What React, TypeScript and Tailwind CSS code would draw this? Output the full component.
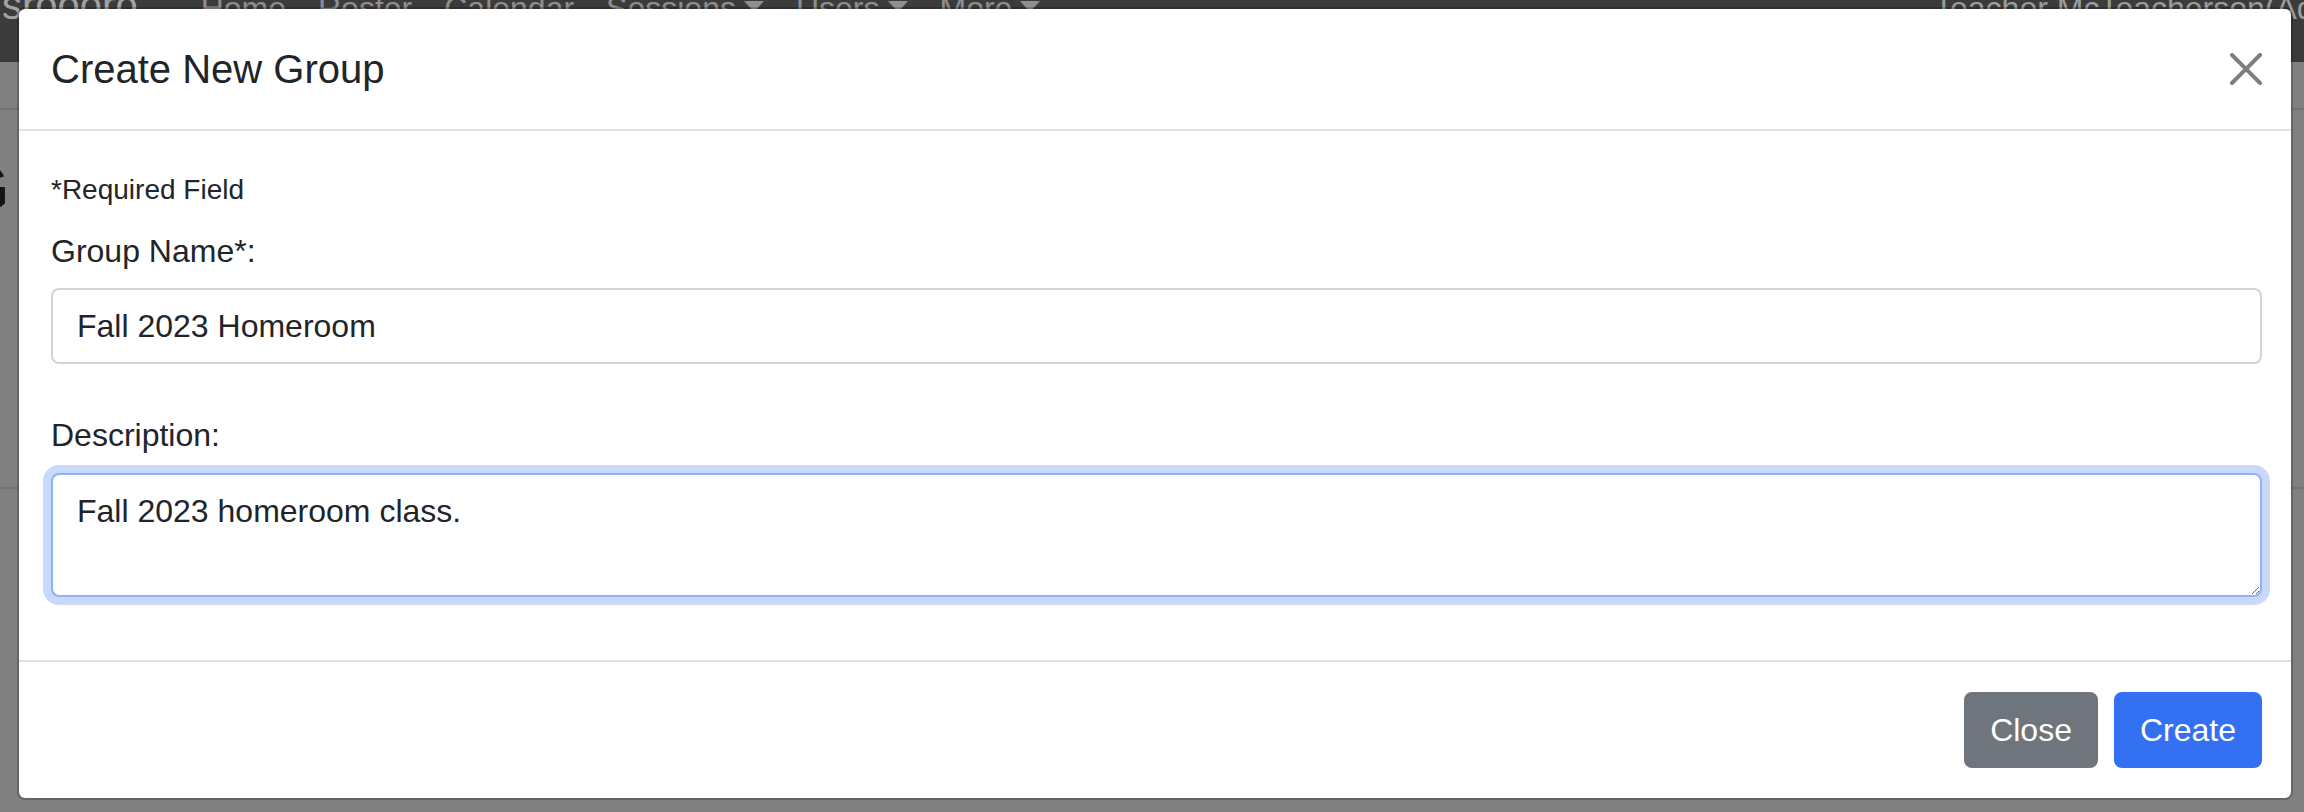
import React from "react";

function Caret() {
  return (
    <span className="ml-[8px] inline-block align-[7px] border-x-[10px] border-t-[11px] border-x-transparent border-t-current" />
  );
}

function CloseIcon() {
  return (
    <svg viewBox="0 0 16 16" className="size-[32px] opacity-50" aria-hidden="true">
      <path
        fill="#000"
        d="M.293.293a1 1 0 0 1 1.414 0L8 6.586 14.293.293a1 1 0 1 1 1.414 1.414L9.414 8l6.293 6.293a1 1 0 0 1-1.414 1.414L8 9.414l-6.293 6.293a1 1 0 0 1-1.414-1.414L6.586 8 .293 1.707a1 1 0 0 1 0-1.414z"
      />
    </svg>
  );
}

const navLinks = [
  { label: "Home" },
  { label: "Roster" },
  { label: "Calendar" },
  { label: "Sessions", dropdown: true },
  { label: "Users", dropdown: true },
  { label: "More", dropdown: true },
];

export default function App() {
  return (
    <div className="relative h-[812px] w-[2304px] overflow-hidden bg-[#808080] font-['Liberation_Sans',Arial,sans-serif] text-[#212529]">
      {/* page behind the backdrop */}
      <nav className="h-[62px] overflow-hidden bg-[#3b3b3b]">
        <div className="-mt-[19px] flex items-baseline whitespace-nowrap leading-[48px]">
          <div className="flex w-[1934px] shrink-0 items-baseline">
            <span className="ml-[2px] mr-[47px] text-[40px] text-[#a3a3a3]">sroooro</span>
            {navLinks.map((link) => (
              <span key={link.label} className="px-[16px] text-[32px] text-[#8f8f8f]">
                {link.label}
                {link.dropdown && <Caret />}
              </span>
            ))}
          </div>
          <span className="shrink-0 text-[32px] text-[#9c9c9c]">Teacher McTeacherson(Admin)</span>
        </div>
      </nav>
      <div className="h-[48px] border-b-2 border-[#737373]" />
      <div className="h-[335px] border-b-2 border-[#737373]">
        <h1 className="-ml-[43px] mt-[44px] whitespace-nowrap text-[67px] font-bold leading-none tracking-[14px] text-[#141414]">
          Groups
        </h1>
      </div>

      {/* modal */}
      <div className="absolute inset-0 pl-[17px] pt-[7px]">
        <div className="w-[2276px] rounded-[8px] border-2 border-black/20 bg-white bg-clip-padding">
          <div className="flex h-[122px] items-center justify-between border-b-2 border-[#dee2e6] pl-[32px] pr-[29px]">
            <h5 className="text-[40px] leading-[60px]">Create New Group</h5>
            <button type="button" className="flex size-[32px] items-center justify-center" aria-label="Close">
              <CloseIcon />
            </button>
          </div>

          <div className="pb-[32px] pl-[32px] pr-[29px] pt-[35px]">
            <div className="h-[48px] leading-[48px]">
              <small className="text-[28px]">*Required Field</small>
            </div>
            <label className="mb-[13px] mt-[13px] block text-[32px] leading-[48px]">Group Name*:</label>
            <input
              readOnly
              defaultValue="Fall 2023 Homeroom"
              className="block h-[76px] w-full rounded-[8px] border-2 border-[#ced4da] bg-white px-[24px] text-[32px] leading-[48px] text-[#212529] outline-none"
            />
            <label className="mb-[14px] mt-[47px] block text-[32px] leading-[48px]">Description:</label>
            <textarea
              readOnly
              defaultValue="Fall 2023 homeroom class."
              className="mb-[31px] block h-[124px] w-full resize-y rounded-[8px] border-2 border-[#8cb3f6] bg-white px-[24px] py-[12px] text-[32px] leading-[48px] text-[#212529] shadow-[0_0_0_8px_#c9d9fb] outline-none"
            />
          </div>

          <div className="flex h-[138px] items-center justify-end gap-[16px] border-t-2 border-[#dee2e6] pr-[29px]">
            <button
              type="button"
              className="h-[76px] rounded-[8px] border-2 border-[#6f757c] bg-[#6f757c] px-[24px] text-[32px] leading-[48px] text-white"
            >
              Close
            </button>
            <button
              type="button"
              className="h-[76px] rounded-[8px] border-2 border-[#3470f2] bg-[#3470f2] px-[24px] text-[32px] leading-[48px] text-white"
            >
              Create
            </button>
          </div>
        </div>
      </div>
    </div>
  );
}
